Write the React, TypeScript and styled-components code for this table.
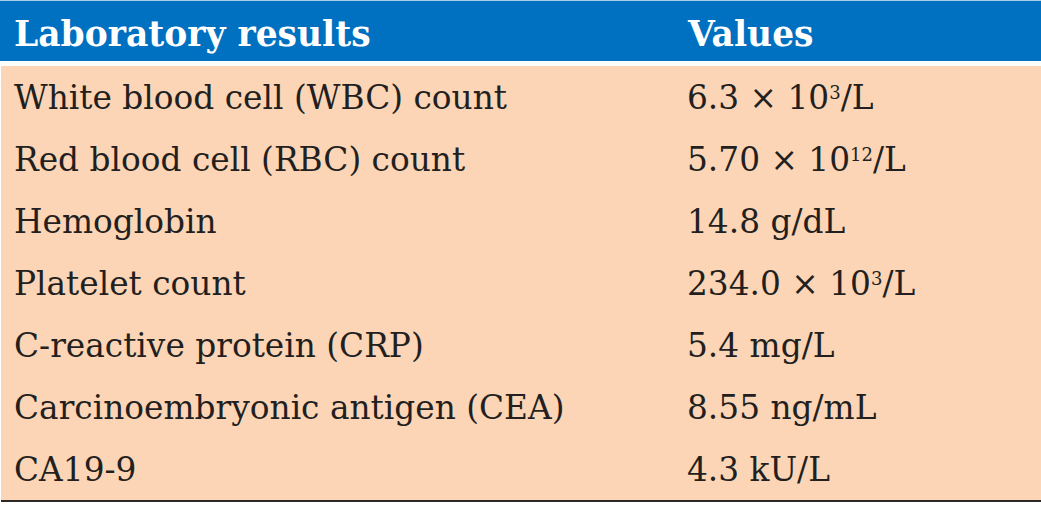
import * as React from "react";
import styled, { createGlobalStyle } from "styled-components";

const Sup = styled.sup`
  font-size: 0.55em;
  line-height: 0;
  vertical-align: 0.55em;
`;

type LabRow = {
  name: string;
  value: React.ReactNode;
};

const getRows = (): LabRow[] => [
  { name: "White blood cell (WBC) count", value: <>6.3 × 10<Sup>3</Sup>/L</> },
  { name: "Red blood cell (RBC) count", value: <>5.70 × 10<Sup>12</Sup>/L</> },
  { name: "Hemoglobin", value: "14.8 g/dL" },
  { name: "Platelet count", value: <>234.0 × 10<Sup>3</Sup>/L</> },
  { name: "C-reactive protein (CRP)", value: "5.4 mg/L" },
  { name: "Carcinoembryonic antigen (CEA)", value: "8.55 ng/mL" },
  { name: "CA19-9", value: "4.3 kU/L" },
];

export default function App() {
  return (
    <>
      <GlobalStyle />
      <StyledTable>
        <StyledHeader>
          <StyledHeadCell>Laboratory results</StyledHeadCell>
          <StyledHeadCell>Values</StyledHeadCell>
        </StyledHeader>
        <StyledBody>
          {getRows().map((row) => (
            <StyledRow key={row.name}>
              <StyledCell>{row.name}</StyledCell>
              <StyledCell>{row.value}</StyledCell>
            </StyledRow>
          ))}
        </StyledBody>
      </StyledTable>
    </>
  );
}

const GlobalStyle = createGlobalStyle`
  html, body {
    margin: 0;
    padding: 0;
    background: #ffffff;
  }

  body {
    font-family: "DejaVu Serif", "Liberation Serif", serif;
    color: #231f20;
  }
`;

const StyledTable = styled.div`
  width: 1041px;
  display: flex;
  flex-direction: column;
  gap: 5px;
`;

const StyledHeader = styled.div`
  display: grid;
  grid-template-columns: 674px 1fr;
  height: 61px;
  padding-left: 14px;
  padding-top: 6px;
  box-sizing: border-box;
  background: #0070c0;
  border-top: 1px solid #a9cbea;
`;

const StyledHeadCell = styled.div`
  font-size: 34.5px;
  font-weight: 700;
  line-height: 54px;
  color: #ffffff;
  white-space: nowrap;
`;

const StyledBody = styled.div`
  display: flex;
  flex-direction: column;
  margin-left: 1px;
  background: #fbd5b5;
  border-bottom: 2px solid #2b2826;
`;

const StyledRow = styled.div`
  display: grid;
  grid-template-columns: 673px 1fr;
  height: 62px;
  box-sizing: border-box;
  padding: 2px 0 0 13px;
`;

const StyledCell = styled.div`
  font-size: 32.8px;
  line-height: 60px;
  white-space: nowrap;
`;
